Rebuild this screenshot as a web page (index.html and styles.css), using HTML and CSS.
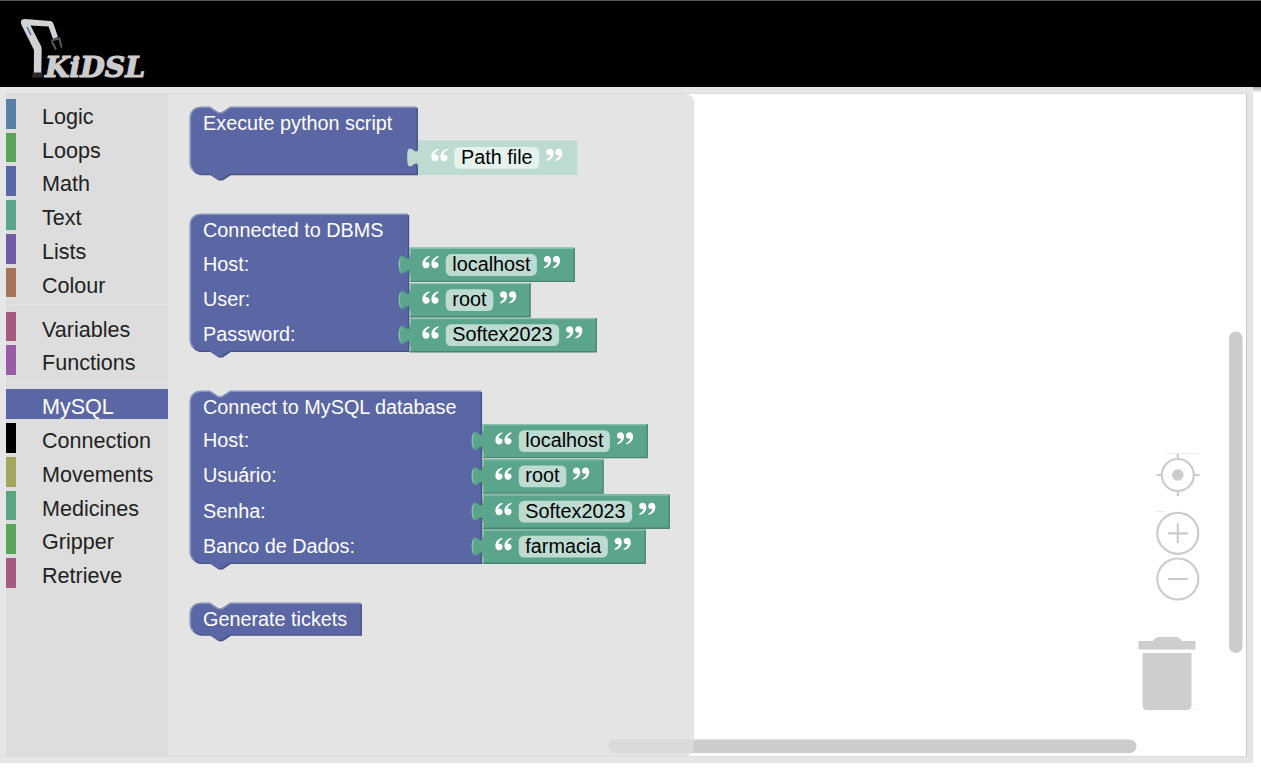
FILE: index.html
```html
<!DOCTYPE html>
<html lang="en">
<head>
<meta charset="utf-8">
<title>KiDSL</title>
<link rel="stylesheet" href="styles.css">
</head>
<body>
<header class="header">
  <svg class="logo" width="180" height="86" viewBox="0 1 180 86">
    <path class="arm-base" d="M33 72 H42 L43 77.500 H32 Z"/>
    <path class="arm" d="M20.800 22 Q21 19 25 19 L50 21 Q52.500 21 53.500 24 L58 37 L53 39 L48.500 26.500 L30.500 25.500 L40.500 45 Q42 47 41.700 50 L41.300 72.500 H33.800 L34 50 L22 26 Q20.800 24 20.800 22 Z"/>
    <path class="arm-label" d="M27 27 L31 35"/>
    <path class="claw" d="M51.500 41.500 L53 40 L59.500 38.500 L61.500 47.500 M52 42 L56 49.500"/>
    <text class="logo-text" x="45" y="76.700" textLength="100" lengthAdjust="spacingAndGlyphs">KiDSL</text>
  </svg>
</header>
<div class="stage">
<main class="editor">
  <div class="workspace">
    <nav class="toolbox">
      <div class="cat logic">Logic</div>
      <div class="cat loops">Loops</div>
      <div class="cat math">Math</div>
      <div class="cat texts">Text</div>
      <div class="cat lists">Lists</div>
      <div class="cat colour">Colour</div>
      <div class="sep"></div>
      <div class="cat variables">Variables</div>
      <div class="cat functions">Functions</div>
      <div class="sep"></div>
      <div class="cat math selected">MySQL</div>
      <div class="cat connection">Connection</div>
      <div class="cat movements">Movements</div>
      <div class="cat medicines">Medicines</div>
      <div class="cat loops">Gripper</div>
      <div class="cat variables">Retrieve</div>
    </nav>
    <svg class="canvas" width="1078" height="662" viewBox="168 94 1078 662">
      <defs>
        <g id="quote-open">
          <path d="M5.300 .2 C2 1 .2 3.200 .2 6 C.2 8.200 1.300 9.300 2.900 9.300 C4.400 9.300 5.500 8.300 5.500 6.900 C5.500 5.500 4.600 4.600 3.300 4.600 C2.900 4.600 2.600 4.700 2.400 4.800 C2.500 3.200 3.600 2 5.500 1.100 Z"/>
          <path d="M12 .2 C8.700 1 6.900 3.200 6.900 6 C6.900 8.200 8 9.300 9.600 9.300 C11.100 9.300 12.200 8.300 12.200 6.900 C12.200 5.500 11.300 4.600 10 4.600 C9.600 4.600 9.300 4.700 9.100 4.800 C9.200 3.200 10.300 2 12.200 1.100 Z"/>
        </g>
        <g id="quote-close"><use href="#quote-open" transform="rotate(180 6.200 4.700)"/></g>
      </defs>

      <rect class="bar" x="1229" y="331.500" width="13.500" height="321.500" rx="6.700"/>
      <rect class="bar" x="608" y="739.500" width="528.500" height="13.500" rx="6.700"/>
      <path class="flyout" d="M168 94 H685 Q694 94 694 103 V747 Q694 756 685 756 H168 Z"/>

      <g transform="translate(189.700 106.700) scale(1.35)">
        <path class="shade" transform="translate(1 1)" d="M0,8 A8,8 0 0 1 8,0 H15 l6,4 3,0 6,-4 H168.100 V49.700 H29.500 l-6,4 -3,0 -6,-4 H8 a8,8 0 0 1 -8,-8 Z"/>
        <path class="block" d="M0,8 A8,8 0 0 1 8,0 H15 l6,4 3,0 6,-4 H168.100 V49.700 H29.500 l-6,4 -3,0 -6,-4 H8 a8,8 0 0 1 -8,-8 Z"/>
        <path class="light" d="M2.700,47.400 A7.500,7.500 0 0 1 .5,41.700 V8 A7.500,7.500 0 0 1 8,.5 H15 l6,4 3,0 6,-4 H168.100"/>
        <text class="label" x="9.900" y="17.400">Execute python script</text>
      </g>
      <g transform="translate(189.700 213.700) scale(1.35)">
        <path class="shade" transform="translate(1 1)" d="M0,8 A8,8 0 0 1 8,0 H161.600 V101.500 H29.500 l-6,4 -3,0 -6,-4 H8 a8,8 0 0 1 -8,-8 Z"/>
        <path class="block" d="M0,8 A8,8 0 0 1 8,0 H161.600 V101.500 H29.500 l-6,4 -3,0 -6,-4 H8 a8,8 0 0 1 -8,-8 Z"/>
        <path class="light" d="M2.700,99.200 A7.500,7.500 0 0 1 .5,93.500 V8 A7.500,7.500 0 0 1 8,.5 H161.600"/>
        <text class="label" x="9.900" y="17.400">Connected to DBMS</text>
        <text class="label" x="9.900" y="42.400">Host:</text>
        <text class="label" x="9.900" y="68.400">User:</text>
        <text class="label" x="9.900" y="94.400">Password:</text>
      </g>
      <g transform="translate(189.700 390.700) scale(1.35)">
        <path class="shade" transform="translate(1 1)" d="M0,8 A8,8 0 0 1 8,0 H15 l6,4 3,0 6,-4 H215.600 V127.400 H29.500 l-6,4 -3,0 -6,-4 H8 a8,8 0 0 1 -8,-8 Z"/>
        <path class="block" d="M0,8 A8,8 0 0 1 8,0 H15 l6,4 3,0 6,-4 H215.600 V127.400 H29.500 l-6,4 -3,0 -6,-4 H8 a8,8 0 0 1 -8,-8 Z"/>
        <path class="light" d="M2.700,125.100 A7.500,7.500 0 0 1 .5,119.400 V8 A7.500,7.500 0 0 1 8,.5 H15 l6,4 3,0 6,-4 H215.600"/>
        <text class="label" x="9.900" y="17.400">Connect to MySQL database</text>
        <text class="label" x="9.900" y="41.700">Host:</text>
        <text class="label" x="9.900" y="67.700">Usuário:</text>
        <text class="label" x="9.900" y="94.100">Senha:</text>
        <text class="label" x="9.900" y="120.100">Banco de Dados:</text>
      </g>
      <g transform="translate(189.700 602.700) scale(1.35)">
        <path class="shade" transform="translate(1 1)" d="M0,8 A8,8 0 0 1 8,0 H15 l6,4 3,0 6,-4 H126.600 V23.500 H29.500 l-6,4 -3,0 -6,-4 H8 a8,8 0 0 1 -8,-8 Z"/>
        <path class="block" d="M0,8 A8,8 0 0 1 8,0 H15 l6,4 3,0 6,-4 H126.600 V23.500 H29.500 l-6,4 -3,0 -6,-4 H8 a8,8 0 0 1 -8,-8 Z"/>
        <path class="light" d="M2.700,21.200 A7.500,7.500 0 0 1 .5,15.500 V8 A7.500,7.500 0 0 1 8,.5 H15 l6,4 3,0 6,-4 H126.600"/>
        <text class="label" x="9.900" y="17.400">Generate tickets</text>
      </g>

      <g class="shadow-value" transform="translate(418 140.500) scale(1.35)">
        <path class="value" d="M0,0 H118 V25.500 H0 V20 c0,-10 -8,8 -8,-7.5 s8,2.5 8,-7.5 Z"/>
        <use class="quote" href="#quote-open" transform="translate(9.700 6)"/>
        <rect class="field" x="26.800" y="4.800" width="63" height="16.200" rx="4"/>
        <text class="field-text" x="31.900" y="17.400">Path file</text>
        <use class="quote" href="#quote-close" transform="translate(94.800 6)"/>
      </g>

      <g transform="translate(409.700 247.700) scale(1.35)">
        <path class="value-shade" d="M0,0 H122.400 V25.500 H0 V20 c0,-10 -8,8 -8,-7.5 s8,2.5 8,-7.5 Z"/>
        <path class="value" d="M0,0 H121.400 V24.500 H0 V20 c0,-10 -8,8 -8,-7.5 s8,2.5 8,-7.5 Z"/>
        <path class="value-light" d="M.5,24.500 V20.500 M-7,17 Q-8.500,12 -7,8 M.5,5 V.5 H121.400"/>
        <use class="quote" href="#quote-open" transform="translate(9.200 6)"/>
        <rect class="field" x="26.700" y="4.700" width="67.500" height="16.200" rx="4"/>
        <text class="field-text" x="31.600" y="17.200">localhost</text>
        <use class="quote" href="#quote-close" transform="translate(99.200 6)"/>
      </g>
      <g transform="translate(409.700 283) scale(1.35)">
        <path class="value-shade" d="M0,0 H89.700 V25.500 H0 V20 c0,-10 -8,8 -8,-7.5 s8,2.5 8,-7.5 Z"/>
        <path class="value" d="M0,0 H88.700 V24.500 H0 V20 c0,-10 -8,8 -8,-7.5 s8,2.5 8,-7.5 Z"/>
        <path class="value-light" d="M.5,24.500 V20.500 M-7,17 Q-8.500,12 -7,8 M.5,5 V.5 H88.700"/>
        <use class="quote" href="#quote-open" transform="translate(9.200 6)"/>
        <rect class="field" x="26.700" y="4.600" width="35.200" height="16.200" rx="4"/>
        <text class="field-text" x="31.600" y="17.200">root</text>
        <use class="quote" href="#quote-close" transform="translate(66.700 6)"/>
      </g>
      <g transform="translate(409.700 318) scale(1.35)">
        <path class="value-shade" d="M0,0 H138.700 V25.500 H0 V20 c0,-10 -8,8 -8,-7.5 s8,2.5 8,-7.5 Z"/>
        <path class="value" d="M0,0 H137.700 V24.500 H0 V20 c0,-10 -8,8 -8,-7.5 s8,2.5 8,-7.5 Z"/>
        <path class="value-light" d="M.5,24.500 V20.500 M-7,17 Q-8.500,12 -7,8 M.5,5 V.5 H137.700"/>
        <use class="quote" href="#quote-open" transform="translate(9.200 6)"/>
        <rect class="field" x="26.700" y="4.600" width="84" height="16.200" rx="4"/>
        <text class="field-text" x="31.600" y="17.200">Softex2023</text>
        <use class="quote" href="#quote-close" transform="translate(115.700 6)"/>
      </g>

      <g transform="translate(482.700 423.900) scale(1.35)">
        <path class="value-shade" d="M0,0 H122.400 V25.500 H0 V20 c0,-10 -8,8 -8,-7.5 s8,2.5 8,-7.5 Z"/>
        <path class="value" d="M0,0 H121.400 V24.500 H0 V20 c0,-10 -8,8 -8,-7.5 s8,2.5 8,-7.5 Z"/>
        <path class="value-light" d="M.5,24.500 V20.500 M-7,17 Q-8.500,12 -7,8 M.5,5 V.5 H121.400"/>
        <use class="quote" href="#quote-open" transform="translate(9.200 6)"/>
        <rect class="field" x="26.700" y="4.700" width="67.500" height="16.200" rx="4"/>
        <text class="field-text" x="31.600" y="17.200">localhost</text>
        <use class="quote" href="#quote-close" transform="translate(99.200 6)"/>
      </g>
      <g transform="translate(482.700 459.200) scale(1.35)">
        <path class="value-shade" d="M0,0 H89.700 V25.500 H0 V20 c0,-10 -8,8 -8,-7.5 s8,2.5 8,-7.5 Z"/>
        <path class="value" d="M0,0 H88.700 V24.500 H0 V20 c0,-10 -8,8 -8,-7.5 s8,2.5 8,-7.5 Z"/>
        <path class="value-light" d="M.5,24.500 V20.500 M-7,17 Q-8.500,12 -7,8 M.5,5 V.5 H88.700"/>
        <use class="quote" href="#quote-open" transform="translate(9.200 6)"/>
        <rect class="field" x="26.700" y="4.600" width="35.200" height="16.200" rx="4"/>
        <text class="field-text" x="31.600" y="17.200">root</text>
        <use class="quote" href="#quote-close" transform="translate(66.700 6)"/>
      </g>
      <g transform="translate(482.700 494.500) scale(1.35)">
        <path class="value-shade" d="M0,0 H138.700 V25.500 H0 V20 c0,-10 -8,8 -8,-7.5 s8,2.5 8,-7.5 Z"/>
        <path class="value" d="M0,0 H137.700 V24.500 H0 V20 c0,-10 -8,8 -8,-7.5 s8,2.5 8,-7.5 Z"/>
        <path class="value-light" d="M.5,24.500 V20.500 M-7,17 Q-8.500,12 -7,8 M.5,5 V.5 H137.700"/>
        <use class="quote" href="#quote-open" transform="translate(9.200 6)"/>
        <rect class="field" x="26.700" y="4.600" width="84" height="16.200" rx="4"/>
        <text class="field-text" x="31.600" y="17.200">Softex2023</text>
        <use class="quote" href="#quote-close" transform="translate(115.700 6)"/>
      </g>
      <g transform="translate(482.700 529.500) scale(1.35)">
        <path class="value-shade" d="M0,0 H120.900 V25.500 H0 V20 c0,-10 -8,8 -8,-7.5 s8,2.5 8,-7.5 Z"/>
        <path class="value" d="M0,0 H119.900 V24.500 H0 V20 c0,-10 -8,8 -8,-7.5 s8,2.5 8,-7.5 Z"/>
        <path class="value-light" d="M.5,24.500 V20.500 M-7,17 Q-8.500,12 -7,8 M.5,5 V.5 H119.900"/>
        <use class="quote" href="#quote-open" transform="translate(9.200 6)"/>
        <rect class="field" x="26.700" y="4.600" width="66" height="16.200" rx="4"/>
        <text class="field-text" x="31.600" y="17.200">farmacia</text>
        <use class="quote" href="#quote-close" transform="translate(97.500 6)"/>
      </g>

      <g class="control">
        <circle cx="1177.800" cy="475" r="16"/>
        <path d="M1177.800 454 V459 M1177.800 491 V496 M1156.500 475 H1162 M1194 475 H1199.500"/>
        <circle class="solid" cx="1177.800" cy="475" r="5.800"/>
        <circle cx="1177.800" cy="533.300" r="20.500"/>
        <path d="M1168 533.300 H1187.800 M1177.800 523.300 V543"/>
        <circle cx="1177.800" cy="579" r="20.500"/>
        <path d="M1168 579 H1187.800"/>
        <path class="faint" d="M1166 453.500 H1199.500 M1156 511.500 H1165 M1195 709.500 H1199"/>
      </g>
      <g class="trash">
        <path d="M1138.500 641 H1153 Q1156 637 1158.500 637 H1176.500 Q1179 637 1182 641 H1195.500 V649.500 H1138.500 Z"/>
        <path d="M1142.500 653 H1191.500 V705 Q1191.500 710 1186.500 710 H1147.500 Q1142.500 710 1142.500 705 Z"/>
      </g>
    </svg>
  </div>
</main>
<div class="edge"></div>
</div>
</body>
</html>
```
FILE: styles.css
```css
body {
  margin: 0;
  background: #fff;
  font-family: "Liberation Sans", Arial, sans-serif;
  overflow: hidden;
}
.header {
  box-sizing: border-box;
  height: 87px;
  background: #000;
  border-top: 1px solid #555;
}
.logo { display: block; }
.arm { fill: #d2d2d4; }
.arm-label { stroke: #5870a8; stroke-width: 1.500; }
.claw { fill: none; stroke: #565963; stroke-width: 2; }
.arm-base { fill: #292929; }
.logo-text {
  font: italic bold 28px "DejaVu Serif", serif;
  fill: #ccc;
  stroke: #ccc;
  stroke-width: 1.200;
}
.stage { display: flex; }
.editor {
  box-sizing: border-box;
  width: 1253px;
  height: 676px;
  padding: 6px;
  background: #e5e6e8;
}
.edge {
  flex: 1;
  height: 6px;
  background: linear-gradient(#aaa, #fff);
}
.workspace {
  box-sizing: border-box;
  display: flex;
  width: 1241px;
  height: 664px;
  border: solid #ddd;
  border-width: 1px 0;
  border-right: 1px solid #c4c4c4;
  background: #fff;
}
.toolbox {
  box-sizing: border-box;
  flex: none;
  width: 162px;
  padding-top: 5px;
  background: #ddd;
}
.cat {
  box-sizing: border-box;
  height: 29.700px;
  margin-bottom: 4.050px;
  padding-left: 26px;
  border-left: 10px solid var(--hue);
  font-size: 21.550px;
  line-height: 35px;
  color: #222;
  white-space: nowrap;
}
.sep {
  height: 1px;
  margin: 7.050px 0 6.300px 4px;
  background: #e8e8e8;
}
.selected { background: var(--hue); color: #fff; }
.logic { --hue: #5b80a5; }
.loops { --hue: #5ba55b; }
.math { --hue: #5b67a5; }
.texts { --hue: #5ba58c; }
.lists { --hue: #745ba5; }
.colour { --hue: #a5745b; }
.variables { --hue: #a55b80; }
.functions { --hue: #995ba5; }
.connection { --hue: #000; }
.movements { --hue: #a5a55b; }
.medicines { --hue: #5ba580; }
.canvas { display: block; flex: none; }
.bar { fill: #ccc; }
.flyout { fill: #ddd; fill-opacity: .8; }
.block { fill: #5b67a5; }
.shade { fill: #495284; }
.light { fill: none; stroke: #8c95c0; stroke-width: 1; }
.value { fill: #5ba58c; }
.value-shade { fill: #498470; }
.value-light { fill: none; stroke: #8cc0ae; stroke-width: 1; }
.shadow-value .value { fill: #bddbd1; }
.field { fill: #fff; fill-opacity: .6; }
.label, .field-text { font-size: 14.670px; }
.label { fill: #fff; }
.field-text { fill: #000; }
.quote { fill: #fff; }
.control { fill: none; stroke: #ccc; stroke-width: 2.200; }
.control .solid { fill: #ccc; stroke: none; }
.control .faint { stroke: #eee; stroke-width: 1; }
.trash { fill: #cecece; }
```
